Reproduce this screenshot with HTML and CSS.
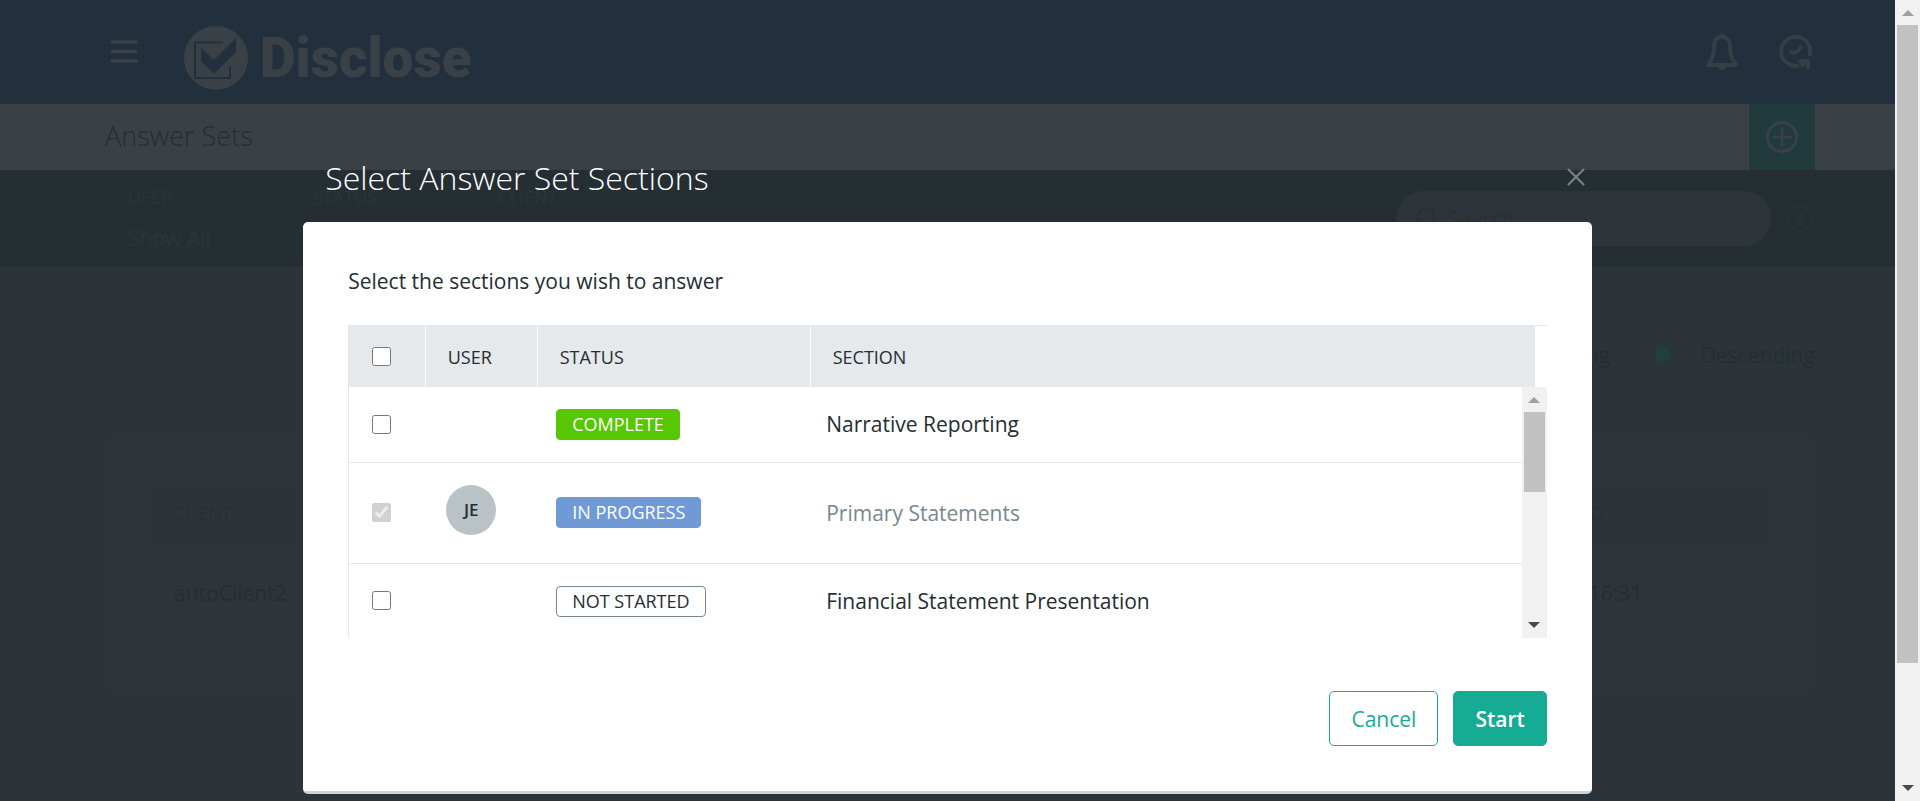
FILE: index.html
```html
<!DOCTYPE html>
<html lang="en">
<head>
<meta charset="utf-8">
<title>Disclose – Answer Sets</title>
<link rel="stylesheet" href="styles.css">
</head>
<body>
<div class="app">
  <header class="topbar">
    <button class="icon-btn menu" aria-label="Menu">
      <svg width="28" height="24" viewBox="0 0 28 24" stroke="currentColor" stroke-width="3.500" stroke-linecap="round"><path d="M2 2H26M2 11.500H26M2 21H26"/></svg>
    </button>
    <a class="brand" href="#">
      <svg width="64" height="64" viewBox="0 0 64 64"><circle cx="32" cy="32" r="32" fill="#394147"/><path d="M39 16.500H11V52H46V40" fill="none" stroke="#22303d" stroke-width="2"/><path d="M17 21L30 34L52 12V26L30 48L17 35Z" fill="#22303d"/></svg>
      <span class="brand-name">Disclose</span>
    </a>
    <div class="top-actions">
      <button class="icon-btn" aria-label="Notifications">
        <svg width="32" height="38" viewBox="0 0 32 38" fill="none" stroke="currentColor" stroke-width="4" stroke-linejoin="round"><path d="M16 4C10 4 8 8.500 8 14C8 22 6 26 2 32H30C26 26 24 22 24 14C24 8.500 22 4 16 4Z"/><path d="M13 2.500Q16-1 19 2.500ZM12 34H20Q16 39 12 34Z" fill="currentColor" stroke-width="1"/></svg>
      </button>
      <button class="icon-btn" aria-label="History">
        <svg width="34" height="34" viewBox="0 0 34 34" fill="none" stroke="currentColor" stroke-width="4"><path d="M30.500 21A14.500 14.500 0 1 0 20 30.500"/><path d="M12 17L17 18L22 12" stroke-width="3.500" stroke-linecap="round" stroke-linejoin="round"/><path d="M21 26H29V33" stroke-linejoin="round" stroke-linecap="round"/><path d="M28 27L22 31"/></svg>
      </button>
    </div>
  </header>
  <div class="pagebar">
    <h1 class="page-title">Answer Sets</h1>
    <button class="add-btn" aria-label="Add answer set">
      <svg width="32" height="32" viewBox="0 0 32 32" fill="none" stroke="currentColor" stroke-width="3"><circle cx="16" cy="16" r="14.500"/><path d="M16 7.500V24.500M7.500 16H24.500" stroke-linecap="round" stroke-width="2.500"/></svg>
    </button>
  </div>
  <div class="filters">
    <div class="filter"><div class="filter-head">USER <svg class="chev" viewBox="0 0 18 10"><path d="M1 1L9 9L17 1"/></svg></div><div class="filter-value">Show All</div></div>
    <div class="filter"><div class="filter-head">STATUS <svg class="chev" viewBox="0 0 18 10"><path d="M1 1L9 9L17 1"/></svg></div></div>
    <div class="filter"><div class="filter-head">CLIENT <svg class="chev" viewBox="0 0 18 10"><path d="M1 1L9 9L17 1"/></svg></div></div>
    <div class="search-group">
      <label class="search">
        <svg width="22" height="24" viewBox="0 0 22 24" fill="none" stroke="currentColor" stroke-width="2"><circle cx="10" cy="10" r="8.500"/><path d="M15 17L20 23"/></svg>
        <input class="search-input" type="text" placeholder="Search" aria-label="Search">
      </label>
      <svg class="info" width="26" height="28" viewBox="0 0 26 28" fill="none" stroke="currentColor" stroke-width="2"><circle cx="13" cy="14" r="12"/><path d="M14 8V10M11 13H14L12 20H15" /></svg>
    </div>
  </div>
  <main class="content">
    <div class="sort">
      <label class="sort-option"><input class="radio" type="radio" name="order">Ascending</label>
      <label class="sort-option"><input class="radio" type="radio" name="order" checked>Descending</label>
    </div>
    <section class="card">
      <table class="list">
        <thead><tr><th>CLIENT</th><th class="list-date">UPDATED</th></tr></thead>
        <tbody><tr><td>autoClient2</td><td class="list-date">Today 16:31</td></tr></tbody>
      </table>
    </section>
  </main>

  <div class="overlay">
    <div class="dialog" role="dialog" aria-labelledby="dialog-title">
      <div class="dialog-head">
        <h2 class="dialog-title" id="dialog-title">Select Answer Set Sections</h2>
        <button class="icon-btn close" aria-label="Close">
          <svg width="18" height="18" viewBox="0 0 18 18" stroke="currentColor" stroke-width="2" stroke-linecap="round"><path d="M1.500 1.500L16.500 16.500M16.500 1.500L1.500 16.500"/></svg>
        </button>
      </div>
      <div class="dialog-body">
        <p class="intro">Select the sections you wish to answer</p>
        <div class="grid-head">
          <table class="sections head">
            <colgroup><col class="c-check"><col class="c-user"><col class="c-status"><col></colgroup>
            <thead><tr><th><input class="tick" type="checkbox" aria-label="Select all"></th><th>USER</th><th>STATUS</th><th>SECTION</th></tr></thead>
          </table>
        </div>
        <div class="grid-body">
          <table class="sections rows">
            <colgroup><col class="c-check"><col class="c-user"><col class="c-status"><col></colgroup>
            <tbody>
              <tr><td><input class="tick" type="checkbox" id="s1"></td><td></td><td class="state"><span class="badge complete">COMPLETE</span></td><td><label for="s1">Narrative Reporting</label></td></tr>
              <tr class="busy"><td><input class="tick" type="checkbox" id="s2" checked disabled></td><td><span class="avatar">JE</span></td><td class="state"><span class="badge progress">IN PROGRESS</span></td><td><label for="s2">Primary Statements</label></td></tr>
              <tr><td><input class="tick" type="checkbox" id="s3"></td><td></td><td class="state"><span class="badge idle">NOT STARTED</span></td><td><label for="s3">Financial Statement Presentation</label></td></tr>
            </tbody>
          </table>
          <div class="scrollbar" aria-hidden="true">
            <svg class="arrow up" viewBox="0 0 12 6"><path d="M6 0L12 6H0Z"/></svg>
            <div class="track"><div class="thumb list-thumb"></div></div>
            <svg class="arrow down" viewBox="0 0 12 6"><path d="M0 0H12L6 6Z"/></svg>
          </div>
        </div>
        <div class="actions">
          <button class="btn ghost">Cancel</button>
          <button class="btn primary">Start</button>
        </div>
      </div>
    </div>
  </div>
</div>
<div class="scrollbar" aria-hidden="true">
  <svg class="arrow up" viewBox="0 0 12 6"><path d="M6 0L12 6H0Z"/></svg>
  <div class="track"><div class="thumb page-thumb"></div></div>
  <svg class="arrow down" viewBox="0 0 12 6"><path d="M0 0H12L6 6Z"/></svg>
</div>
</body>
</html>
```
FILE: styles.css
```css
* { box-sizing: border-box; }
body {
  margin: 0;
  display: flex;
  height: 100vh;
  overflow: hidden;
  font: 400 21px/28px "Open Sans", "Noto Sans", sans-serif;
  color: #242e32;
  background: #2c343a;
}
h1, h2, p { margin: 0; font-weight: 300; }
button, input { font: inherit; color: inherit; }
a { color: inherit; text-decoration: none; }
svg { display: block; flex: none; }

.app { position: relative; flex: 1; display: flex; flex-direction: column; min-width: 0; }
.icon-btn { padding: 0; border: 0; background: none; color: #394147; }

.topbar {
  display: flex;
  align-items: center;
  height: 104px;
  flex: none;
  padding: 0 82px 0 110px;
  background: #22303d;
}
.brand { display: flex; align-items: center; gap: 12px; margin: 12px 0 0 46px; color: #394147; }
.brand-name { font: 900 55px/64px Roboto, sans-serif; }
.top-actions { display: flex; align-items: center; gap: 41px; margin-left: auto; }
.top-actions .icon-btn { color: #343e45; }

.pagebar {
  display: flex;
  align-items: center;
  height: 66px;
  flex: none;
  padding: 0 80px 0 105px;
  background: #394147;
}
.page-title { font-size: 27px; line-height: 36px; padding-bottom: 2px; }
.add-btn {
  display: grid;
  place-items: center;
  width: 66px;
  height: 66px;
  margin-left: auto;
  padding: 0;
  border: 0;
  background: #213b3c;
  color: #394147;
}

.filters {
  display: flex;
  height: 97px;
  flex: none;
  padding: 13px 82px 0 128px;
  background: #242e33;
  color: #2a353a;
}
.filter { width: 185px; }
.filter-head { display: flex; justify-content: space-between; align-items: center; padding-right: 42px; font-size: 18px; }
.filter-value { padding-top: 13px; }
.chev { width: 16px; height: 9px; fill: none; stroke: #283337; stroke-width: 2; }
.search-group { display: flex; align-items: center; gap: 16px; height: 55px; margin: 8px 0 0 auto; }
.search {
  display: flex;
  align-items: center;
  gap: 10px;
  width: 375px;
  height: 55px;
  padding: 0 20px;
  border-radius: 28px;
  background: #2d353b;
  color: #27322f;
}
.search-input { flex: 1; min-width: 0; padding: 0; border: 0; background: none; }
.search-input::placeholder { color: #27322f; opacity: 1; }
.info { color: #283337; }

.content { flex: 1; padding: 73px 80px 0 105px; }
.sort { display: flex; justify-content: flex-end; gap: 38px; }
.sort-option { display: flex; align-items: center; gap: 24px; }
.radio {
  appearance: none;
  width: 29px;
  height: 29px;
  margin: 0;
  border: 1px solid #2a363b;
  border-radius: 50%;
}
.radio:checked { background: radial-gradient(circle, #1f3f40 7px, transparent 8px); }
.card { margin-top: 68px; padding: 45px 45px 48px; border-radius: 4px; background: #2d353b; }
.list { width: 100%; border-collapse: collapse; text-align: left; }
.list th { height: 61px; padding: 0 24px; background: #2c343a; font-size: 18px; font-weight: 300; }
.list td { height: 100px; padding: 0 24px; }
.list .list-date { width: 270px; }

.overlay { position: absolute; inset: 0; display: flex; justify-content: center; align-items: flex-start; padding-top: 154px; }
.dialog { width: 68%; }
.dialog-head { display: flex; justify-content: space-between; height: 68px; padding: 0 7px 0 22px; }
.dialog-title { color: #fff; font-size: 32px; line-height: 48px; }
.close { align-self: flex-start; padding-top: 14px; color: #77858c; }
.dialog-body { padding: 45px; border-bottom: 3px solid #cdd4d8; border-radius: 5px; background: #fff; }
.intro { font-weight: 400; }

.grid-head { margin-top: 30px; padding-right: 12px; border-top: 1px solid #e5e9ec; }
.sections { width: 100%; border-collapse: collapse; table-layout: fixed; text-align: left; }
.c-check { width: 77px; }
.c-user { width: 112px; }
.c-status { width: 273px; }
.sections th {
  height: 61px;
  padding: 0 22px;
  background: #e5e9ec;
  border-left: 1px solid #fff;
  font-size: 18px;
  font-weight: 400;
}
.sections th:first-child { border-left: 0; padding-left: 24px; }
.grid-body { display: flex; height: 251px; overflow: hidden; border-left: 1px solid #e5e9ec; }
.rows { flex: 1; width: auto; height: 251px; }
.rows td { height: 75px; padding: 0 15px; border-bottom: 1px solid #e5e9ec; }
.rows td:first-child { padding-left: 23px; }
.rows td:nth-child(2) { padding-left: 20px; }
.rows .state { padding-left: 18px; }
.rows .busy td { height: 101px; }
.rows tr:last-child td { border-bottom: 0; }
.busy label { color: #78878f; }
.tick { display: block; width: 19px; height: 19px; margin: 0; }
.badge {
  display: inline-block;
  padding: 0 15px;
  border: 1px solid;
  border-radius: 4px;
  font-size: 18px;
  line-height: 29px;
  vertical-align: middle;
}
.complete { background: #56c700; border-color: #56c700; color: #fff; }
.progress { background: #6f9ad6; border-color: #6f9ad6; color: #fff; }
.idle { border-color: #78878f; }
.avatar {
  display: grid;
  place-items: center;
  width: 50px;
  height: 50px;
  margin-bottom: 6px;
  border-radius: 50%;
  background: #b9c2c7;
  font-size: 17px;
  font-weight: 600;
}

.actions { display: flex; justify-content: flex-end; gap: 15px; margin-top: 53px; }
.btn { height: 55px; padding: 0 21px; border: 1px solid #16ab95; border-radius: 5px; }
.ghost { background: #fff; color: #16ab95; }
.primary { background: #16ab95; color: #fff; font-weight: 600; }

.scrollbar { display: flex; flex-direction: column; align-items: center; flex: none; width: 25px; padding: 10px 2px; background: #f1f1f1; }
.arrow { width: 12px; height: 6px; }
.up { fill: #a0a0a0; }
.down { fill: #4a4a4a; }
.track { flex: 1; width: 100%; padding: 9px 0; }
.thumb { background: #c1c1c1; }
.list-thumb { height: 40%; }
.page-thumb { height: 85%; }
```
